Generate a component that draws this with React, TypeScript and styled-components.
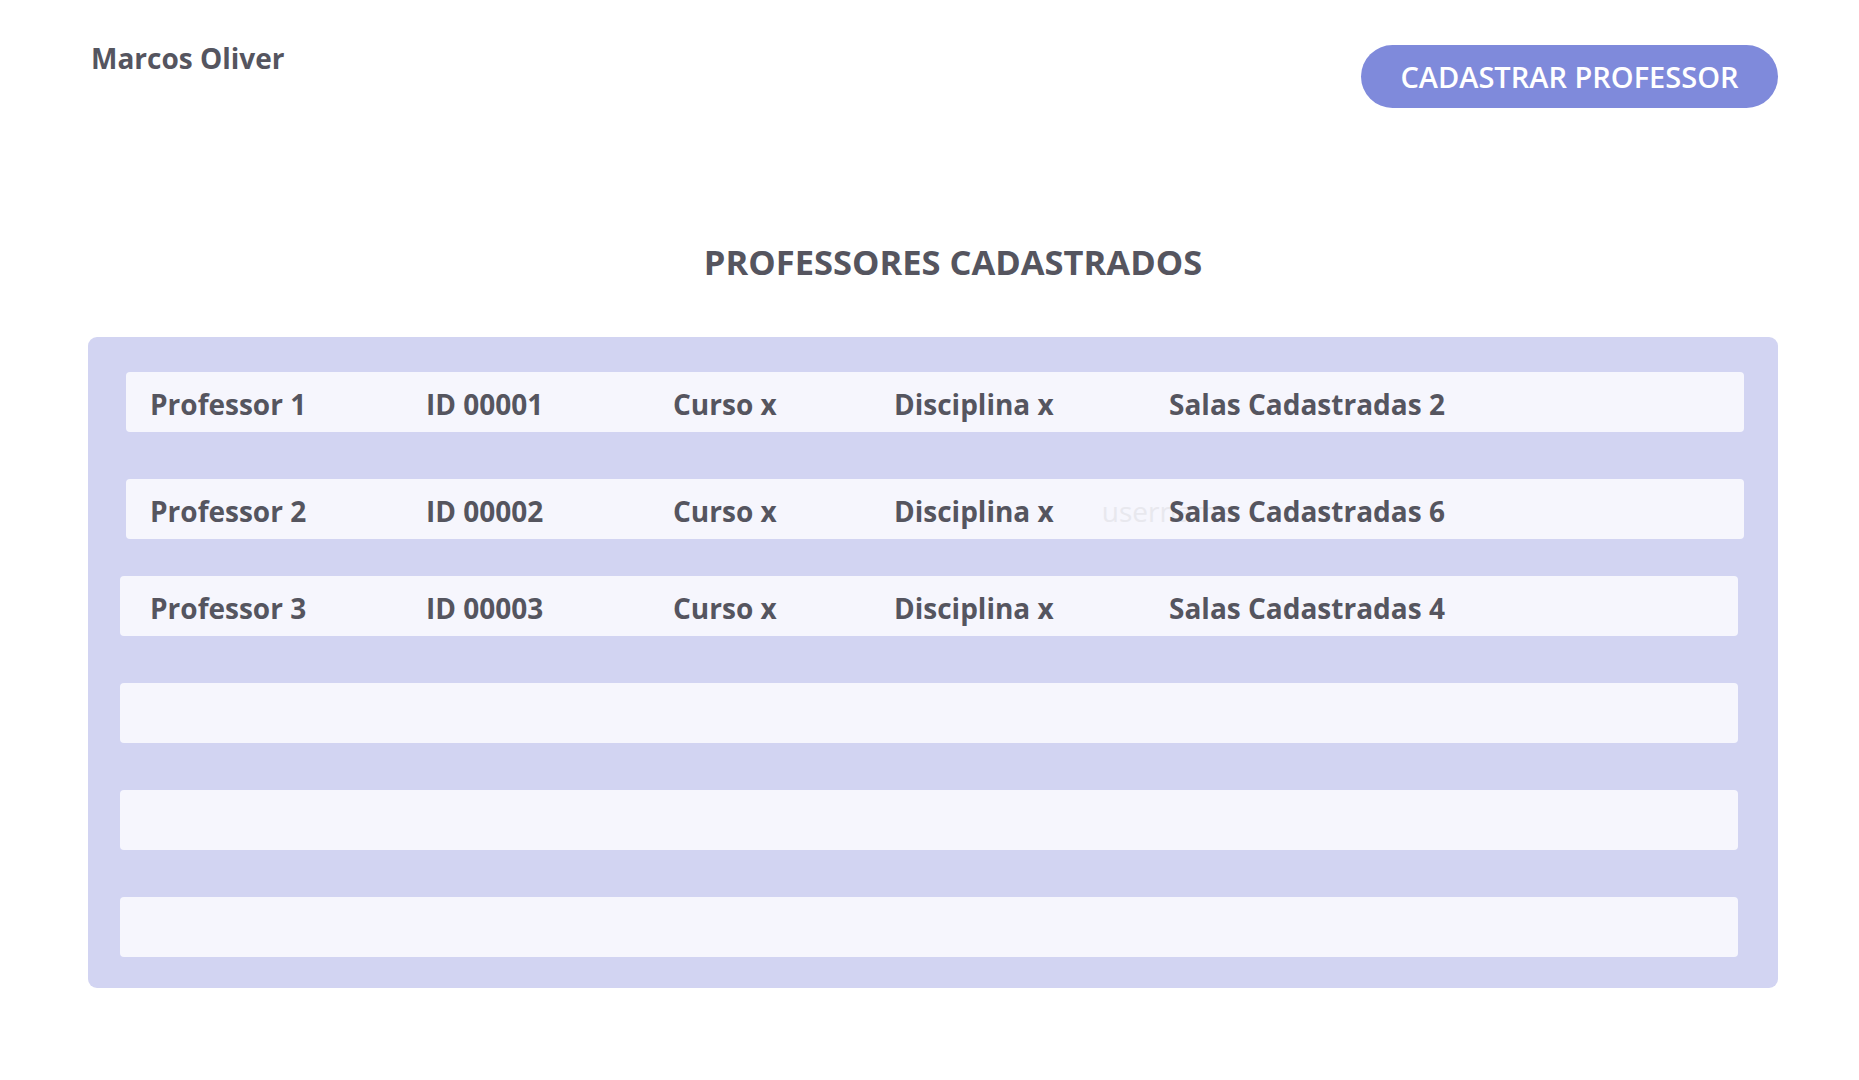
import React from "react";
import styled, { createGlobalStyle } from "styled-components";

const Global = createGlobalStyle`
  html, body {
    margin: 0;
    padding: 0;
    background: #ffffff;
  }
  body {
    font-family: "Open Sans", "Noto Sans", sans-serif;
    color: #55555f;
  }
`;

const Page = styled.div`
  display: flex;
  flex-direction: column;
  min-height: 1080px;
  padding: 0 81px 0 88px;
  box-sizing: border-box;
`;

const Header = styled.header`
  display: flex;
  justify-content: space-between;
  align-items: flex-start;
  padding-top: 39px;
`;

const UserName = styled.div`
  font-size: 28px;
  line-height: 38px;
  font-weight: 700;
  color: #55555f;
  padding-left: 3px;
`;

const PrimaryButton = styled.button`
  margin-top: 6px;
  width: 417px;
  height: 63px;
  border: none;
  border-radius: 32px;
  background: #7f8adb;
  color: #ffffff;
  font-family: "Open Sans", "Noto Sans", sans-serif;
  font-size: 29px;
  font-weight: 600;
  letter-spacing: 0;
  cursor: pointer;
  display: flex;
  align-items: center;
  justify-content: center;
  padding: 0;
`;

const Title = styled.h1`
  margin: 131px 0 0 0;
  padding-left: 40px;
  text-align: center;
  font-size: 34.5px;
  line-height: 46px;
  font-weight: 700;
  color: #55555f;
`;

const Panel = styled.section`
  margin-top: 52px;
  background: #d2d4f2;
  border-radius: 9px;
  padding: 35px 0 31px 0;
  display: flex;
  flex-direction: column;
`;

const Row = styled.div<{ $shifted?: boolean; $gap?: number }>`
  height: 60px;
  margin: ${(p) => (p.$gap ?? 0)}px ${(p) => (p.$shifted ? 40 : 34)}px 0
    ${(p) => (p.$shifted ? 32 : 38)}px;
  padding-left: ${(p) => (p.$shifted ? 30 : 24)}px;
  padding-top: 3px;
  background: #f6f6fd;
  border-radius: 4px;
  display: grid;
  grid-template-columns: 276px 247px 221px 275px 1fr;
  align-items: center;
  box-sizing: border-box;
`;

const Cell = styled.div`
  font-size: 28px;
  line-height: 38px;
  font-weight: 700;
  color: #55555f;
  white-space: nowrap;
`;

const Ghost = styled.span`
  font-weight: 400;
  color: #e8e8ee;
  margin-left: 48px;
`;

type Prof = {
  name: string;
  id: string;
  curso: string;
  disciplina: string;
  salas: number;
  ghost?: boolean;
};

const profs: Prof[] = [
  { name: "Professor 1", id: "ID 00001", curso: "Curso x", disciplina: "Disciplina x", salas: 2 },
  { name: "Professor 2", id: "ID 00002", curso: "Curso x", disciplina: "Disciplina x", salas: 6, ghost: true },
  { name: "Professor 3", id: "ID 00003", curso: "Curso x", disciplina: "Disciplina x", salas: 4 },
];

export default function App() {
  return (
    <>
      <Global />
      <Page>
        <Header>
          <UserName>Marcos Oliver</UserName>
          <PrimaryButton>CADASTRAR PROFESSOR</PrimaryButton>
        </Header>
        <Title>PROFESSORES CADASTRADOS</Title>
        <Panel>
          {profs.map((p, i) => (
            <Row key={p.id} $shifted={i >= 2} $gap={i === 0 ? 0 : i === 2 ? 37 : 47}>
              <Cell>{p.name}</Cell>
              <Cell>{p.id}</Cell>
              <Cell>{p.curso}</Cell>
              <Cell>
                {p.disciplina}
                {p.ghost && <Ghost>username</Ghost>}
              </Cell>
              <Cell>Salas Cadastradas {p.salas}</Cell>
            </Row>
          ))}
          <Row $shifted $gap={47} />
          <Row $shifted $gap={47} />
          <Row $shifted $gap={47} />
        </Panel>
      </Page>
    </>
  );
}
